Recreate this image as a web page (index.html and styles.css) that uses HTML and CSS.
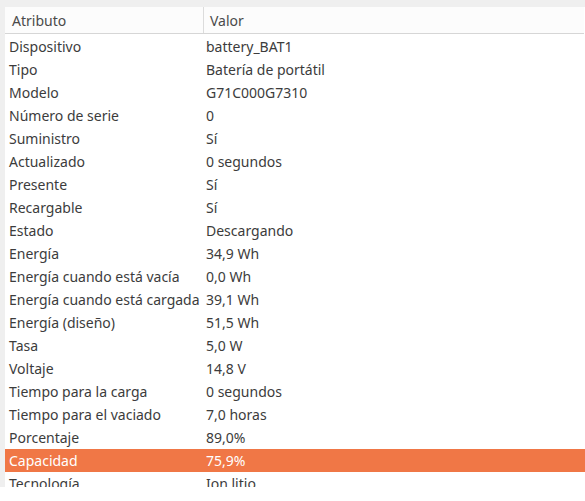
FILE: index.html
```html
<!DOCTYPE html>
<html lang="es">
<head>
<meta charset="utf-8">
<link rel="stylesheet" href="styles.css">
</head>
<body>
<div class="window">
  <div class="view">
    <div class="header">
      <div class="hcell first">Atributo</div>
      <div class="hcell second">Valor</div>
    </div>
    <div class="rows">
      <div class="row"><div class="c1">Dispositivo</div><div class="c2">battery_BAT1</div></div>
      <div class="row"><div class="c1">Tipo</div><div class="c2">Batería de portátil</div></div>
      <div class="row"><div class="c1">Modelo</div><div class="c2">G71C000G7310</div></div>
      <div class="row"><div class="c1">Número de serie</div><div class="c2">0</div></div>
      <div class="row"><div class="c1">Suministro</div><div class="c2">Sí</div></div>
      <div class="row"><div class="c1">Actualizado</div><div class="c2">0 segundos</div></div>
      <div class="row"><div class="c1">Presente</div><div class="c2">Sí</div></div>
      <div class="row"><div class="c1">Recargable</div><div class="c2">Sí</div></div>
      <div class="row"><div class="c1">Estado</div><div class="c2">Descargando</div></div>
      <div class="row"><div class="c1">Energía</div><div class="c2">34,9 Wh</div></div>
      <div class="row"><div class="c1">Energía cuando está vacía</div><div class="c2">0,0 Wh</div></div>
      <div class="row"><div class="c1">Energía cuando está cargada</div><div class="c2">39,1 Wh</div></div>
      <div class="row"><div class="c1">Energía (diseño)</div><div class="c2">51,5 Wh</div></div>
      <div class="row"><div class="c1">Tasa</div><div class="c2">5,0 W</div></div>
      <div class="row"><div class="c1">Voltaje</div><div class="c2">14,8 V</div></div>
      <div class="row"><div class="c1">Tiempo para la carga</div><div class="c2">0 segundos</div></div>
      <div class="row"><div class="c1">Tiempo para el vaciado</div><div class="c2">7,0 horas</div></div>
      <div class="row"><div class="c1">Porcentaje</div><div class="c2">89,0%</div></div>
      <div class="row selected"><div class="c1">Capacidad</div><div class="c2">75,9%</div></div>
      <div class="row"><div class="c1">Tecnología</div><div class="c2">Ion litio</div></div>
    </div>
  </div>
</div>
</body>
</html>
```

FILE: styles.css
```css
html, body {
  margin: 0;
  padding: 0;
  background: #ffffff;
}
.window {
  width: 585px;
  height: 487px;
  overflow: hidden;
  background: #efefef;
  padding-top: 7px;
  padding-left: 5px;
  box-sizing: border-box;
}
.view {
  background: #ffffff;
  height: 480px;
  overflow: hidden;
  font-family: "Noto Sans", "DejaVu Sans", sans-serif;
  font-size: 14px;
  color: #3c3c3c;
}
.header {
  display: grid;
  grid-template-columns: 198px 1fr;
  height: 26px;
  background: #fcfcfc;
  border-bottom: 1px solid #d6d6d6;
  margin-right: 1px;
}
.hcell {
  display: flex;
  align-items: center;
  padding-left: 7px;
  color: #4a4a4a;
}
.hcell.second {
  border-left: 1px solid #dcdcdc;
  padding-left: 6px;
}
.rows {
  padding-top: 1px;
}
.row {
  display: grid;
  grid-template-columns: 198px 1fr;
  height: 23px;
  align-items: center;
}
.c1 {
  padding-left: 4px;
  white-space: nowrap;
}
.c2 {
  padding-left: 3px;
  white-space: nowrap;
}
.row.selected {
  background: #f07746;
  color: #ffffff;
}
```
